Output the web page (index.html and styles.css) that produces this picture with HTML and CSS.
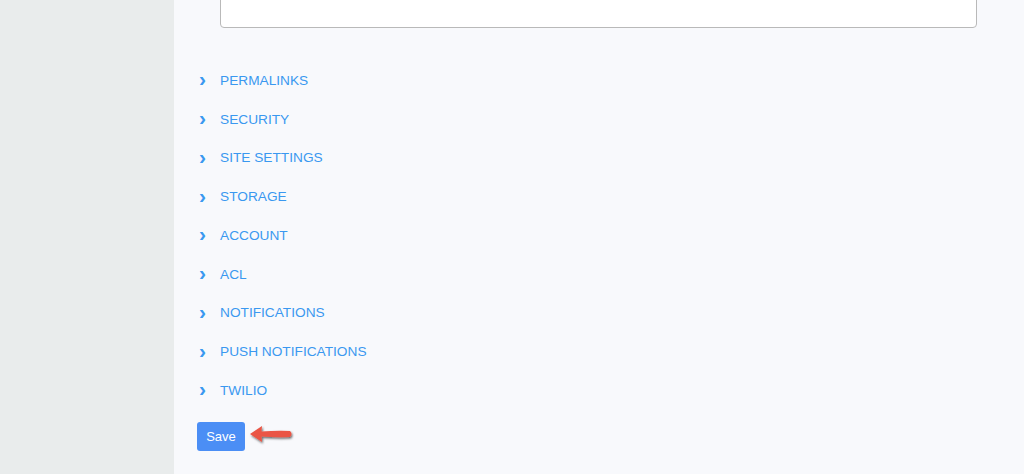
FILE: index.html
```html
<!DOCTYPE html>
<html>
<head>
    <title>Settings</title>
    <link rel="stylesheet" href="styles.css">
</head>
<body>
    <div class="layout">
        <div class="sidebar"></div>
        <div class="main">
            <div class="field">
                <input type="text" class="text-input">
            </div>
            <ul class="sections">
                <li><span class="chev">&#x203A;</span>PERMALINKS</li>
                <li><span class="chev">&#x203A;</span>SECURITY</li>
                <li><span class="chev">&#x203A;</span>SITE SETTINGS</li>
                <li><span class="chev">&#x203A;</span>STORAGE</li>
                <li><span class="chev">&#x203A;</span>ACCOUNT</li>
                <li><span class="chev">&#x203A;</span>ACL</li>
                <li><span class="chev">&#x203A;</span>NOTIFICATIONS</li>
                <li><span class="chev">&#x203A;</span>PUSH NOTIFICATIONS</li>
                <li><span class="chev">&#x203A;</span>TWILIO</li>
            </ul>
            <div class="actions">
                <button class="save">Save</button>
                <svg class="arrow" width="50" height="24" viewBox="0 0 50 24">
                    <defs>
                        <filter id="sh" x="-20%" y="-40%" width="140%" height="180%">
                            <feDropShadow dx="1" dy="1.5" stdDeviation="1" flood-color="#000" flood-opacity="0.6"/>
                        </filter>
                    </defs>
                    <path d="M2 11 L14 3 L13.5 8.5 Q28 7.5 42 8 Q45 11 42 14 Q28 14.5 13.5 13.5 L14 19 Z" fill="#ea5544" filter="url(#sh)"/>
                </svg>
            </div>
        </div>
    </div>
</body>
</html>
```

FILE: styles.css
```css
body {
    margin: 0;
    font-family: "Liberation Sans", Arial, sans-serif;
    overflow: hidden;
}
.layout {
    display: flex;
    height: 474px;
}
.sidebar {
    width: 174px;
    background: #e9ecec;
    flex-shrink: 0;
}
.main {
    flex: 1;
    background: #f8f9fc;
    padding: 0 47px 0 23px;
}
.field {
    margin-top: -13px;
    padding-left: 23px;
}
.text-input {
    display: block;
    width: 100%;
    height: 41px;
    box-sizing: border-box;
    border: 1px solid #b9b9b9;
    border-radius: 4px;
    background: #fff;
}
.sections {
    list-style: none;
    margin: 33px 0 0 0;
    padding: 0;
}
.sections li {
    height: 38.75px;
    font-size: 13.7px;
    color: #3a98f0;
    display: flex;
    align-items: center;
}
.chev {
    width: 23px;
    font-family: "Liberation Sans", Arial, sans-serif;
    font-size: 21px;
    font-weight: bold;
    color: #3a98f0;
    position: relative;
    top: -1px;
    padding-left: 2px;
    box-sizing: border-box;
}
.actions {
    display: flex;
    align-items: center;
    margin-top: 12px;
}
.save {
    width: 48px;
    height: 29px;
    background: #4b8ef5;
    color: #fff;
    border: none;
    border-radius: 3px;
    font-family: "Liberation Sans", Arial, sans-serif;
    font-size: 13px;
    padding: 0;
}
.arrow {
    margin-left: 3px;
    margin-top: -2px;
}
```
